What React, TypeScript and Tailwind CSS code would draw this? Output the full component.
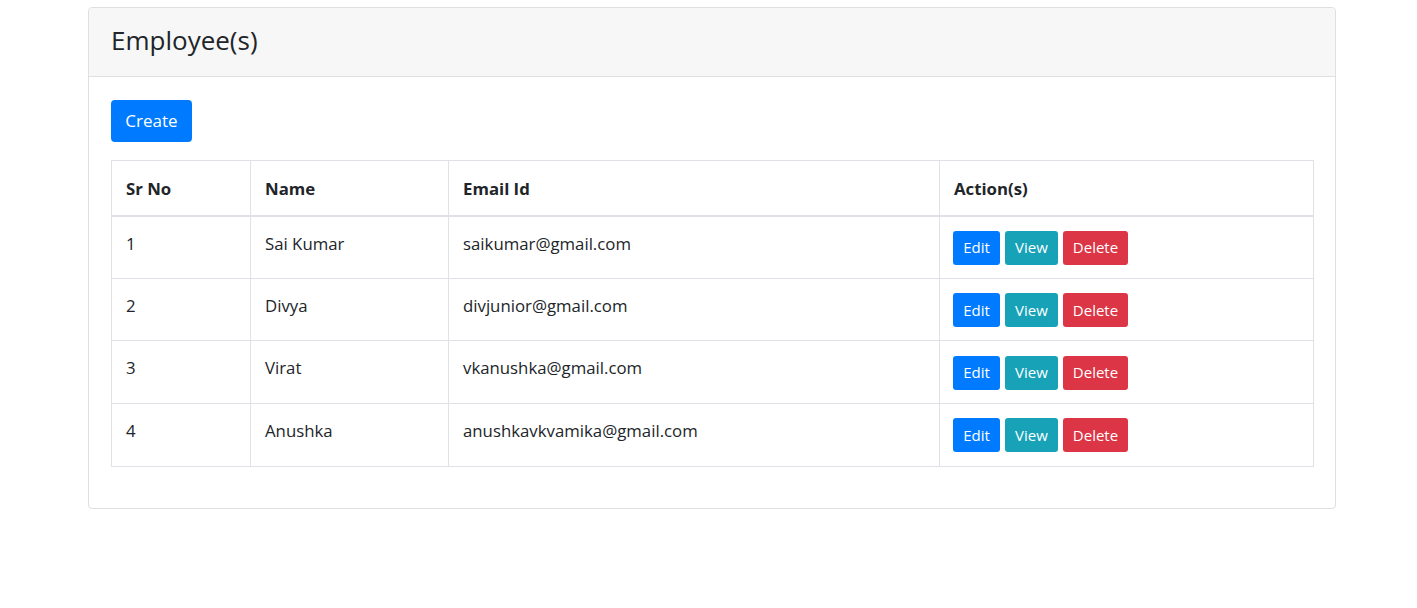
import React from "react";

type Employee = { id: number; name: string; email: string };

const employees: Employee[] = [
  { id: 1, name: "Sai Kumar", email: "saikumar@gmail.com" },
  { id: 2, name: "Divya", email: "divjunior@gmail.com" },
  { id: 3, name: "Virat", email: "vkanushka@gmail.com" },
  { id: 4, name: "Anushka", email: "anushkavkvamika@gmail.com" },
];

const font = { fontFamily: '"Segoe UI", "Open Sans", "Noto Sans", sans-serif' };

export default function App() {
  return (
    <div className="min-h-[608px] bg-white pt-[7px] text-[#212529]" style={font}>
      <div className="ml-[88px] w-[1248px] rounded-[4px] border border-[#dfdfdf]">
        {/* header */}
        <div className="flex h-[69px] items-start rounded-t-[4px] border-b border-[#dfdfdf] bg-[#f7f7f7] px-[22px] pt-[14px]">
          <h3 className="text-[26px] leading-[36px] font-medium">Employee(s)</h3>
        </div>

        <div className="px-[22px] pt-[23px] pb-[23px]">
          <button
            type="button"
            className="h-[42px] w-[81px] rounded-[4px] bg-[#007bff] text-[17px] text-white"
          >
            Create
          </button>

          <table className="mt-[18px] mb-[18px] w-[1202px] table-fixed border-collapse border border-[#dee2e6] text-[16.8px]">
            <colgroup>
              <col className="w-[139px]" />
              <col className="w-[198px]" />
              <col className="w-[491px]" />
              <col className="w-[374px]" />
            </colgroup>
            <thead>
              <tr className="h-[55px] border-b-2 border-[#dee2e6] text-left">
                <th className="border-r border-[#dee2e6] px-[14px] pt-[2px] align-middle font-bold">Sr No</th>
                <th className="border-r border-[#dee2e6] px-[14px] pt-[2px] align-middle font-bold">Name</th>
                <th className="border-r border-[#dee2e6] px-[14px] pt-[2px] align-middle font-bold">Email Id</th>
                <th className="px-[14px] pt-[2px] align-middle font-bold">Action(s)</th>
              </tr>
            </thead>
            <tbody>
              {employees.map((e) => (
                <tr key={e.id} className="h-[62.7px] border-b border-[#dee2e6]">
                  <td className="border-r border-[#dee2e6] px-[14px] pt-[14px] align-top leading-[26px]">{e.id}</td>
                  <td className="border-r border-[#dee2e6] px-[14px] pt-[14px] align-top leading-[26px]">{e.name}</td>
                  <td className="border-r border-[#dee2e6] px-[14px] pt-[14px] align-top leading-[26px]">{e.email}</td>
                  <td className="px-[13px] pt-[1px] align-middle">
                    <div className="flex gap-[5px]">
                      <button className="h-[34px] w-[47px] rounded-[3px] bg-[#007bff] text-[15px] text-white">Edit</button>
                      <button className="h-[34px] w-[53px] rounded-[3px] bg-[#17a2b8] text-[15px] text-white">View</button>
                      <button className="h-[34px] w-[65px] rounded-[3px] bg-[#dc3545] text-[15px] text-white">Delete</button>
                    </div>
                  </td>
                </tr>
              ))}
            </tbody>
          </table>
        </div>
      </div>
    </div>
  );
}
